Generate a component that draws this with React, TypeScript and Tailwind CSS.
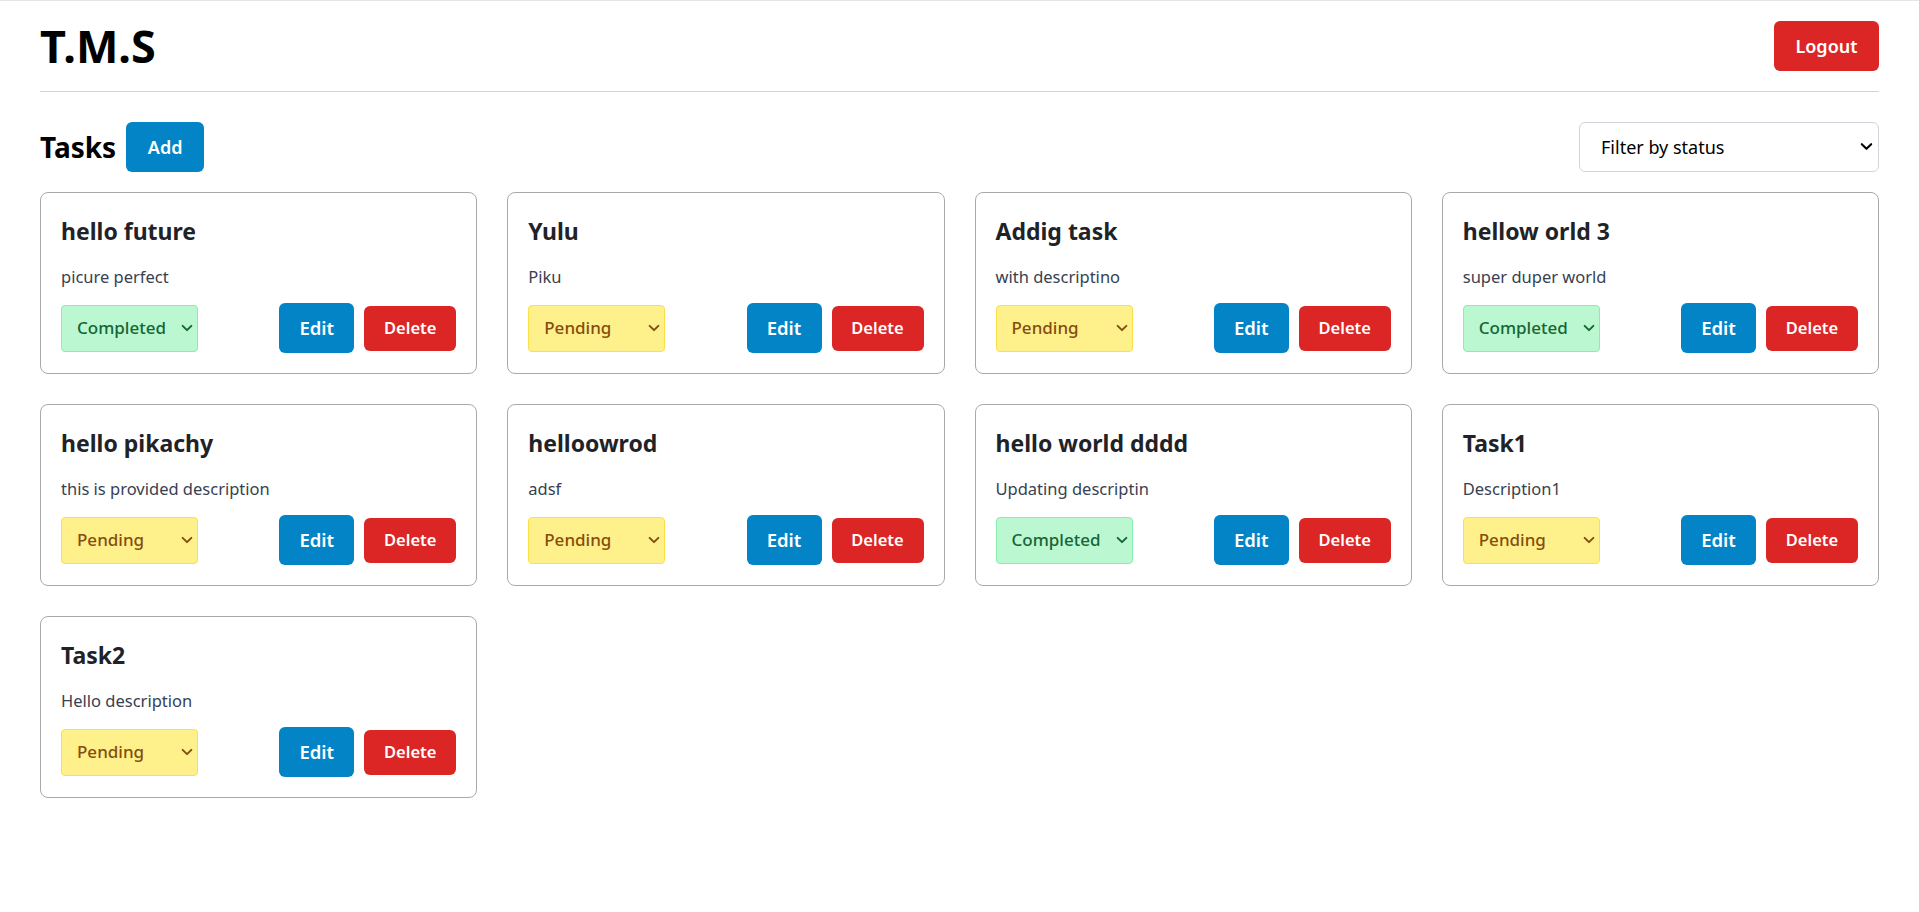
import React from "react";

type Task = { title: string; desc: string; status: "Completed" | "Pending" };

const tasks: Task[] = [
  { title: "hello future", desc: "picure perfect", status: "Completed" },
  { title: "Yulu", desc: "Piku", status: "Pending" },
  { title: "Addig task", desc: "with descriptino", status: "Pending" },
  { title: "hellow orld 3", desc: "super duper world", status: "Completed" },
  { title: "hello pikachy", desc: "this is provided description", status: "Pending" },
  { title: "helloowrod", desc: "adsf", status: "Pending" },
  { title: "hello world dddd", desc: "Updating descriptin", status: "Completed" },
  { title: "Task1", desc: "Description1", status: "Pending" },
  { title: "Task2", desc: "Hello description", status: "Pending" },
];

function Chevron({ className }: { className?: string }) {
  return (
    <svg className={className} viewBox="0 0 16 16" fill="none" stroke="currentColor" strokeWidth="2.2" strokeLinecap="round" strokeLinejoin="round">
      <path d="M3 5.5 L8 10.5 L13 5.5" />
    </svg>
  );
}

function StatusSelect({ status }: { status: Task["status"] }) {
  const done = status === "Completed";
  return (
    <div className="relative w-[137px] h-[47px]">
      <select
        defaultValue={status}
        className={
          done
            ? "appearance-none w-full h-full rounded border border-[#86efac] bg-[#bbf7d0] text-[#166534] pl-[15px] pr-4 text-[17px] font-medium outline-none"
            : "appearance-none w-full h-full rounded border border-[#fde047] bg-[#fef08a] text-[#854d0e] pl-[15px] pr-4 text-[17px] font-medium outline-none"
        }
      >
        <option>Pending</option>
        <option>Completed</option>
      </select>
      <Chevron
        className={
          done
            ? "pointer-events-none absolute right-[4px] top-[16px] w-[14px] h-[14px] text-[#166534]"
            : "pointer-events-none absolute right-[4px] top-[16px] w-[14px] h-[14px] text-[#854d0e]"
        }
      />
    </div>
  );
}

function Card({ task }: { task: Task }) {
  return (
    <div className="rounded-lg border border-[#a9a9a9] bg-white p-5">
      <h3 className="text-[23px] leading-[36px] font-bold text-[#1f2328]">{task.title}</h3>
      <p className="mt-4 text-[16.5px] leading-6 text-[#374151]">{task.desc}</p>
      <div className="mt-3.5 flex h-[50px] items-center justify-between">
        <StatusSelect status={task.status} />
        <div className="flex items-center gap-2.5">
          <button className="h-[50px] w-[75px] rounded-md bg-[#0284c7] text-[18.5px] font-semibold text-white">Edit</button>
          <button className="h-[45px] w-[92px] rounded-md bg-[#dc2626] text-[16.5px] font-semibold text-white">Delete</button>
        </div>
      </div>
    </div>
  );
}

export default function App() {
  return (
    <div className="min-h-screen bg-white border-t border-[#e5e5e5] font-['Noto_Sans',sans-serif]">
      <div className="px-10">
        <header className="flex items-center justify-between border-b border-[#d4d4d4] py-5">
          <h1 className="text-[45px] leading-[50px] font-bold text-black">T.M.S</h1>
          <button className="h-[50px] w-[105px] rounded-md bg-[#dc2626] text-[18px] font-semibold text-white">Logout</button>
        </header>
        <div className="mt-[30px] flex items-center justify-between">
          <div className="flex items-center gap-2.5">
            <h2 className="text-[28px] leading-[50px] font-bold text-black">Tasks</h2>
            <button className="h-[50px] w-[78px] rounded-md bg-[#0284c7] text-[18px] font-semibold text-white">Add</button>
          </div>
          <div className="relative w-[300px] h-[50px]">
            <select
              defaultValue=""
              className="appearance-none w-full h-full rounded-md border border-[#d1d5db] bg-white pl-[21px] pr-10 text-[18px] text-black outline-none"
            >
              <option value="">Filter by status</option>
              <option>Pending</option>
              <option>Completed</option>
            </select>
            <Chevron className="pointer-events-none absolute right-[5px] top-[17px] w-[15px] h-[15px] text-black" />
          </div>
        </div>
        <div className="mt-5 grid grid-cols-4 gap-[30px]">
          {tasks.map((t, i) => (
            <Card key={i} task={t} />
          ))}
        </div>
      </div>
    </div>
  );
}
